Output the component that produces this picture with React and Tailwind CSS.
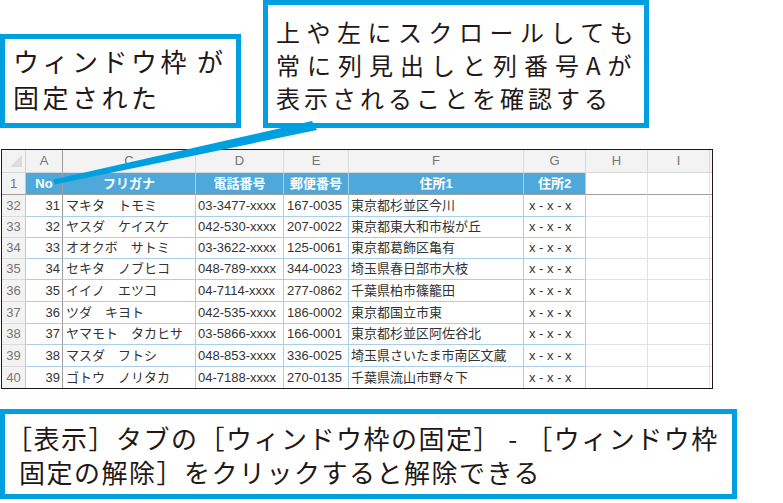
const W = [
  "w-[24px]",
  "w-[37px]",
  "w-[133px]",
  "w-[88px]",
  "w-[65px]",
  "w-[175px]",
  "w-[62px]",
  "w-[62px]",
  "w-[62px]",
  "w-[2px]",
];

const rows = [
  ["32", "31", "マキタ　トモミ", "03-3477-xxxx", "167-0035", "東京都杉並区今川"],
  ["33", "32", "ヤスダ　ケイスケ", "042-530-xxxx", "207-0022", "東京都東大和市桜が丘"],
  ["34", "33", "オオクボ　サトミ", "03-3622-xxxx", "125-0061", "東京都葛飾区亀有"],
  ["35", "34", "セキタ　ノブヒコ", "048-789-xxxx", "344-0023", "埼玉県春日部市大枝"],
  ["36", "35", "イイノ　エツコ", "04-7114-xxxx", "277-0862", "千葉県柏市篠籠田"],
  ["37", "36", "ツダ　キヨト", "042-535-xxxx", "186-0002", "東京都国立市東"],
  ["38", "37", "ヤマモト　タカヒサ", "03-5866-xxxx", "166-0001", "東京都杉並区阿佐谷北"],
  ["39", "38", "マスダ　フトシ", "048-853-xxxx", "336-0025", "埼玉県さいたま市南区文蔵"],
  ["40", "39", "ゴトウ　ノリタカ", "04-7188-xxxx", "270-0135", "千葉県流山市野々下"],
];

const H = ["h-[22px]", "h-[21px]", "h-[21px]", "h-[21px]", "h-[22px]", "h-[22px]", "h-[21px]", "h-[22px]", "h-[21px]"];

function Cell({ w, className = "", children }) {
  return (
    <div className={`${w} shrink-0 flex items-center overflow-hidden whitespace-nowrap ${className}`}>
      {children}
    </div>
  );
}

function Sheet() {
  const letters = ["A", "C", "D", "E", "F", "G", "H", "I"];
  const heads = ["No", "フリガナ", "電話番号", "郵便番号", "住所1", "住所2"];
  return (
    <div className="ml-[1px] mt-[21px] w-[712px] h-[240px] border border-[#231815] bg-white font-['Liberation_Sans','Noto_Sans_CJK_JP',sans-serif] text-[13px] leading-[16px]">
      {/* column header */}
      <div className="flex h-[23px] bg-[#f3f3f3]">
        <Cell w={W[0]} className="relative border-r border-b border-[#d5d5d5]">
          <svg className="absolute left-0 top-0" width="24" height="22" viewBox="0 0 24 22">
            <polygon points="20,5 20,17 8,17" fill="#dcdcdc" />
          </svg>
        </Cell>
        {letters.map((l, i) => (
          <Cell
            key={l}
            w={W[i + 1]}
            className={`justify-center text-[#757575] border-b border-r ${i === 0 ? "border-r-[#9e9e9e] border-b-[#d5d5d5]" : "border-[#dadada]"}`}
          >
            {l}
          </Cell>
        ))}
        <Cell w={W[9]} className="border-b border-[#d5d5d5]" />
      </div>
      {/* row 1 */}
      <div className="flex h-[22px]">
        <Cell w={W[0]} className="justify-center bg-[#f3f3f3] text-[#757575] border-r border-b border-r-[#c6c6c6] border-b-[#9e9e9e]">
          1
        </Cell>
        {heads.map((h, i) => (
          <Cell
            key={h}
            w={W[i + 1]}
            className={`justify-center bg-[#4ea8d9] text-white font-bold border-r border-b border-b-[#9e9e9e] ${i === 0 ? "border-r-[#9e9e9e]" : "border-r-[#a3d0ec]"}`}
          >
            {h}
          </Cell>
        ))}
        <Cell w={W[7]} className="border-r border-b border-r-[#e1e1e1] border-b-[#9e9e9e]" />
        <Cell w={W[8]} className="border-r border-b border-r-[#e1e1e1] border-b-[#9e9e9e]" />
        <Cell w={W[9]} className="border-b border-b-[#9e9e9e]" />
      </div>
      {/* data rows */}
      {rows.map((r, ri) => {
        const last = ri === rows.length - 1;
        const bb = last ? "" : "border-b";
        return (
          <div key={r[0]} className={`flex ${H[ri]}`}>
            <Cell w={W[0]} className={`justify-center bg-[#f3f3f3] text-[#757575] border-r ${bb} border-r-[#c6c6c6] border-b-[#dadada]`}>
              {r[0]}
            </Cell>
            <Cell w={W[1]} className={`justify-end pr-[2px] text-[#333333] border-r ${bb} border-r-[#9e9e9e] border-b-[#a9cfe9]`}>
              {r[1]}
            </Cell>
            <Cell w={W[2]} className={`pl-[3px] text-[#333333] border-r ${bb} border-[#a9cfe9]`}>
              {r[2]}
            </Cell>
            <Cell w={W[3]} className={`pl-[2px] text-[#333333] border-r ${bb} border-[#a9cfe9]`}>
              {r[3]}
            </Cell>
            <Cell w={W[4]} className={`pl-[3px] text-[#333333] border-r ${bb} border-[#a9cfe9]`}>
              {r[4]}
            </Cell>
            <Cell w={W[5]} className={`pl-[2px] text-[#333333] border-r ${bb} border-[#a9cfe9]`}>
              {r[5]}
            </Cell>
            <Cell w={W[6]} className={`pl-[5px] text-[#333333] border-r ${bb} border-[#a9cfe9]`}>
              x - x - x
            </Cell>
            <Cell w={W[7]} className={`border-r ${bb} border-[#e1e1e1]`} />
            <Cell w={W[8]} className={`border-r ${bb} border-[#e1e1e1]`} />
            <Cell w={W[9]} className={`${bb} border-[#e1e1e1]`} />
          </div>
        );
      })}
    </div>
  );
}

export default function App() {
  return (
    <div className="relative w-[783px] h-[503px] bg-white overflow-hidden font-['Noto_Sans_CJK_JP',sans-serif] text-[#231815]">
      <div className="flex h-[128px] items-start">
        <div className="mt-[34px] w-[241px] h-[94px] border-[5px] border-[#00a0e0] bg-white pl-[8px] pt-[4px] text-[26px] leading-[36px] tracking-[3.5px] whitespace-nowrap">
          <div>
            ウィンドウ枠<span className="ml-[7px]">が</span>
          </div>
          <div>固定された</div>
        </div>
        <div className="ml-[22px] w-[386px] h-[128px] border-[5px] border-[#00a0e0] bg-white pl-[8px] pt-[10px] text-[24px] leading-[33px] whitespace-nowrap">
          <div className="tracking-[6.5px]">上や左にスクロールしても</div>
          <div className="tracking-[7px]">常に列見出しと列番号Aが</div>
          <div className="tracking-[4px]">表示されることを確認する</div>
        </div>
      </div>
      <Sheet />
      <div className="mt-[20px] w-[737px] h-[90px] border-[5px] border-[#00a0e0] bg-white pl-[14px] pt-[7px] text-[26px] leading-[34px] tracking-[1.5px] whitespace-nowrap">
        <div className="indent-[-13px]">［表示］タブの［ウィンドウ枠の固定］ - ［ウィンドウ枠</div>
        <div>固定の解除］をクリックすると解除できる</div>
      </div>
      <svg className="pointer-events-none absolute left-0 top-0" width="783" height="503" viewBox="0 0 783 503">
        <polygon points="53.5,179.6 312,121 317,130 54.5,184.4" fill="#00a0e0" />
      </svg>
    </div>
  );
}
